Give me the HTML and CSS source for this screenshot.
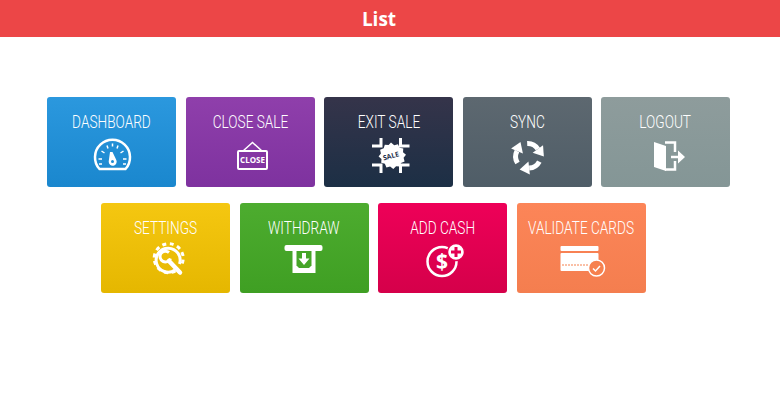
FILE: index.html
```html
<!DOCTYPE html>
<html lang="en">
<head>
    <meta charset="UTF-8">
    <title>List</title>
    <link rel="stylesheet" href="styles.css">
</head>
<body>

<header class="topbar">List</header>

<main class="menu">
    <div class="menu-row row-one">
        <a class="tile tile-blue">
            <span class="tile-label">DASHBOARD</span>
            <svg class="tile-icon" viewBox="0 0 44 36">
                <path class="line-wide" d="M9.500 32A17.500 17.500 0 1 1 35.500 32Z"/>
                <path class="thin" d="M8.500 22h3.500M33 22h3.500M11.500 14l3 2M33.500 14l-3 2M17 8.500l1 3M28 8.500l-1 3M22.500 6.500v3M9 27h3M33 27h3"/>
                <path class="solid" d="M20 15h2.500l3.800 8a4 4 0 1 1-7.600 1.500z"/>
                <circle class="hole-blue" cx="22.500" cy="24.500" r="1.500"/>
            </svg>
        </a>
        <a class="tile tile-purple">
            <span class="tile-label">CLOSE SALE</span>
            <svg class="tile-icon" viewBox="0 0 44 36">
                <path class="thin" d="M15 14l9.500-8.500 9.500 8.500"/>
                <rect class="line" x="10" y="14" width="29" height="18" rx="1"/>
                <text class="icon-text" x="24.500" y="26">CLOSE</text>
            </svg>
        </a>
        <a class="tile tile-dark">
            <span class="tile-label">EXIT SALE</span>
            <svg class="tile-icon" viewBox="0 0 44 36">
                <path class="marks" d="M5 9h9V1M42.500 9h-9V1M5 28h9v8M42.500 28h-9v8"/>
                <path class="solid" d="M24 5.500l3.200 2.700 3.800-1 1.600 3.500 3.700.8-.3 3.800 3 2.500-2.400 3 1 3.700-3.600 1.400-1.100 3.600-3.800-.3-2.800 2.700-3.200-2.300-3.700.8-1.500-3.600-3.700-1 .3-3.800-2.900-2.600 2.300-3-.8-3.700 3.600-1.400 1.100-3.600 3.800.3z"/>
                <text class="icon-text sale-text" x="24" y="21.500" transform="rotate(-15 24 19)">SALE</text>
            </svg>
        </a>
        <a class="tile tile-slate">
            <span class="tile-label">SYNC</span>
            <svg class="tile-icon" viewBox="0 0 44 36">
                <g id="sync-arrow">
                    <path class="bold" d="M12.500 26A12 12 0 0 1 12 14"/>
                    <path class="solid" d="M15.500 5l2.400 11.600-11.800-5.200z"/>
                </g>
                <use href="#sync-arrow" transform="rotate(120 23 19)"/>
                <use href="#sync-arrow" transform="rotate(240 23 19)"/>
            </svg>
        </a>
        <a class="tile tile-gray">
            <span class="tile-label">LOGOUT</span>
            <svg class="tile-icon" viewBox="0 0 44 36">
                <path class="solid" d="M10 5l12 4v25l-12-4z"/>
                <path class="line-wide" d="M21 5.500h10V15M31 24v8.500H21"/>
                <path class="line-wide" d="M27 20h8"/>
                <path class="solid" d="M34 13.500l7 6.500-7 6.500z"/>
            </svg>
        </a>
    </div>

    <div class="menu-row row-two">
        <a class="tile tile-yellow">
            <span class="tile-label">SETTINGS</span>
            <svg class="tile-icon" viewBox="0 0 44 36">
                <path class="gear-teeth" d="M31.500 28A14.500 14.500 0 1 1 37.500 22"/>
                <path class="ring" d="M31 27A12 12 0 1 1 35.500 21"/>
                <path class="ring" d="M25 9.500A5.400 5.400 0 1 0 26.500 15.500"/>
                <path class="handle" d="M25 18l11 11.500"/>
            </svg>
        </a>
        <a class="tile tile-green">
            <span class="tile-label">WITHDRAW</span>
            <svg class="tile-icon" viewBox="0 0 44 36">
                <rect class="solid" x="2.500" y="2" width="38" height="6" rx="2"/>
                <path class="solid" d="M10.500 8h23v22h-23z"/>
                <path class="green-fill" d="M14.500 8h15v14.500l-2.500 2.500H17l-2.500-2.500z"/>
                <path class="solid" d="M20 10h4v5.500h3.500L22 22l-5.500-6.500H20z"/>
            </svg>
        </a>
        <a class="tile tile-pink">
            <span class="tile-label">ADD CASH</span>
            <svg class="tile-icon" viewBox="0 0 44 36">
                <circle class="line-wide" cx="21" cy="18.500" r="14.500"/>
                <text class="dollar" x="21" y="26">$</text>
                <circle class="plus-disc" cx="35" cy="9" r="8.500"/>
                <path class="plus" d="M35 4v10M30 9h10"/>
            </svg>
        </a>
        <a class="tile tile-orange">
            <span class="tile-label">VALIDATE CARDS</span>
            <svg class="tile-icon" viewBox="0 0 44 36">
                <rect class="solid" x="1.500" y="3" width="38" height="5" rx="1"/>
                <rect class="solid" x="1.500" y="10" width="38" height="18" rx="1"/>
                <path class="dash" d="M3 22h26"/>
                <circle class="check-disc" cx="37.500" cy="25" r="8"/>
                <path class="check" d="M34 25.500l2.500 2.500 4.500-5"/>
            </svg>
        </a>
    </div>
</main>

</body>
</html>
```

FILE: styles.css
```css
body {
    margin: 0;
    background-color: #fff;
    font-family: Roboto, Arial, sans-serif;
}

.topbar {
    height: 37px;
    padding-right: 22px;
    line-height: 38px;
    background-color: #ec4647;
    color: #fff;
    font-family: "Open Sans", Arial, sans-serif;
    font-size: 19px;
    font-weight: 700;
    text-align: center;
}

.menu {
    padding-top: 60px;
}

.menu-row {
    display: flex;
    gap: 9.5px;
}

.row-one {
    margin: 0 0 16px 47px;
}

.row-two {
    margin-left: 101px;
}

.tile {
    display: flex;
    flex-direction: column;
    align-items: center;
    width: 129px;
    height: 90px;
    border-radius: 3px;
    color: #fff;
}

/* the reference uses a condensed face, Roboto is squeezed to the same width */
.tile-label {
    height: 40px;
    line-height: 50px;
    font-size: 17.5px;
    font-weight: 300;
    white-space: nowrap;
    transform: scaleX(0.78);
}

.tile-icon {
    width: 44px;
    height: 36px;
    overflow: visible;
}

.tile-blue { background: linear-gradient(#2b98de, #1a87ce); }
.tile-purple { background: linear-gradient(#8f3fab, #7e329f); }
.tile-dark { background: linear-gradient(#35344a, #1c2f45); }
.tile-slate { background: linear-gradient(#5d6870, #4f5d67); }
.tile-gray { background: linear-gradient(#8e9c9c, #849696); }
.tile-yellow { background: linear-gradient(#f5c711, #e5b700); }
.tile-green { background: linear-gradient(#4dac2f, #3f9f23); }
.tile-pink { background: linear-gradient(#ee0058, #d5004a); }
.tile-orange { background: linear-gradient(#fc8558, #f47e4f); }

/* icon parts */
.line, .line-wide, .thin, .bold, .marks, .ring, .handle, .dash, .plus, .check, .gear-teeth {
    fill: none;
    stroke: #fff;
}

.line { stroke-width: 2; }
.line-wide { stroke-width: 2.5; }
.thin { stroke-width: 1.5; }
.bold { stroke-width: 5; }
.marks { stroke-width: 3; }
.ring { stroke-width: 3; }
.handle { stroke-width: 4.5; stroke-linecap: round; }
.solid { fill: #fff; }

.hole-blue { fill: #1f8dd4; }

.icon-text {
    fill: #fff;
    font-family: "Open Sans", Arial, sans-serif;
    font-size: 8px;
    font-weight: 700;
    text-anchor: middle;
}

.sale-text {
    fill: #25304a;
    font-size: 7px;
}

.gear-teeth {
    stroke-width: 3;
    stroke-dasharray: 4 3.600;
}

.green-fill { fill: #46a528; }

.dollar {
    fill: #fff;
    font-family: "Open Sans", Arial, sans-serif;
    font-size: 21px;
    font-weight: 700;
    text-anchor: middle;
}

.plus-disc {
    fill: #fff;
    stroke: #e40052;
    stroke-width: 1.500;
}

.plus {
    stroke: #e40052;
    stroke-width: 3;
}

.dash {
    stroke: #f5814f;
    stroke-width: 1;
    stroke-dasharray: 2 1;
}

.check-disc {
    fill: #f6814f;
    stroke: #fff;
    stroke-width: 1.500;
}

.check { stroke-width: 1.500; }
```
